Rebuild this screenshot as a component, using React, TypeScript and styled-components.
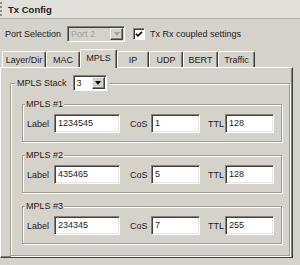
import React from 'react';
import styled, { createGlobalStyle } from 'styled-components';

const FACE = '#d5d2cb';
const SHADOW = '#858279';
const DARK = '#404040';

const GlobalStyle = createGlobalStyle`
  body {
    margin: 0;
    background: ${FACE};
  }
  * {
    box-sizing: border-box;
  }
`;

const Window = styled.div`
  width: 300px;
  height: 265px;
  overflow: hidden;
  background: ${FACE};
  font-family: 'Liberation Sans', Arial, sans-serif;
  font-size: 9px;
  color: #1c1c1c;
  display: flex;
  flex-direction: column;
`;

const TitleBar = styled.div`
  height: 19px;
  flex: 0 0 19px;
  display: flex;
  align-items: center;
  background: #e2e0db;
  border-bottom: 1px solid #b3b0a9;
`;

const Grip = styled.div`
  width: 2px;
  height: 14px;
  border-left: 2px dotted #8f8c86;
`;

const Title = styled.span`
  margin-left: 6px;
  font-weight: bold;
  font-size: 9.5px;
`;

const PortRow = styled.div`
  display: flex;
  align-items: center;
  height: 16px;
  margin-top: 7px;
  padding-left: 5px;
`;

const Text = styled.span<{ $w?: number; $gap?: number }>`
  flex: 0 0 ${p => (p.$w ? `${p.$w}px` : 'auto')};
  margin-left: ${p => p.$gap ?? 0}px;
  white-space: nowrap;
`;

const Combo = styled.div<{ $w: number; $disabled?: boolean; $gap?: number }>`
  width: ${p => p.$w}px;
  height: 16px;
  margin-left: ${p => p.$gap ?? 0}px;
  display: flex;
  padding: 1px;
  background: ${p => (p.$disabled ? FACE : '#fff')};
  border-top: 1px solid ${SHADOW};
  border-left: 1px solid ${SHADOW};
  border-bottom: 1px solid #fff;
  border-right: 1px solid #fff;
  box-shadow: inset 1px 1px 0 ${DARK};
`;

const ComboValue = styled.span<{ $disabled?: boolean }>`
  flex: 1;
  line-height: 12px;
  padding-left: 2px;
  color: ${p => (p.$disabled ? '#a4a19a' : '#1c1c1c')};
`;

const ComboButton = styled.div`
  width: 13px;
  display: flex;
  align-items: center;
  justify-content: center;
  background: ${FACE};
  border: 1px solid;
  border-color: #f4f3ef ${DARK} ${DARK} #f4f3ef;
  box-shadow: inset -1px -1px 0 ${SHADOW};
`;

const Arrow = styled.div<{ $disabled?: boolean }>`
  width: 0;
  height: 0;
  border-left: 3.5px solid transparent;
  border-right: 3.5px solid transparent;
  border-top: 4px solid ${p => (p.$disabled ? '#a4a19a' : '#000')};
`;

const CheckBox = styled.div`
  width: 12px;
  height: 12px;
  margin-left: 8px;
  background: #fff;
  border-top: 1px solid ${SHADOW};
  border-left: 1px solid ${SHADOW};
  border-bottom: 1px solid #fff;
  border-right: 1px solid #fff;
  box-shadow: inset 1px 1px 0 ${DARK};
  display: flex;
  align-items: center;
  justify-content: center;
`;

const TabStrip = styled.div`
  display: flex;
  align-items: flex-end;
  height: 18px;
  margin-top: 7px;
  padding-left: 2px;
`;

const Tab = styled.div<{ $w: number; $active?: boolean }>`
  width: ${p => p.$w}px;
  height: ${p => (p.$active ? 19 : 16)}px;
  margin-bottom: ${p => (p.$active ? -1 : 0)}px;
  position: relative;
  z-index: ${p => (p.$active ? 1 : 0)};
  display: flex;
  align-items: center;
  justify-content: center;
  padding-bottom: ${p => (p.$active ? 2 : 0)}px;
  background: ${FACE};
  border: 1px solid;
  border-bottom: none;
  border-color: #fff ${DARK} transparent #fff;
  border-radius: 2px 2px 0 0;
  box-shadow: inset -1px 0 0 ${SHADOW};
`;

const Panel = styled.div`
  width: 293px;
  padding: 7px 2px 1px 9px;
  border-top: 1px solid #fff;
  border-left: 1px solid #fff;
  border-right: 1px solid ${DARK};
  border-bottom: 1px solid ${DARK};
  box-shadow: inset -1px -1px 0 ${SHADOW};
`;

const Group = styled.fieldset<{ $outer?: boolean }>`
  margin: ${p => (p.$outer ? '0' : '7px 0 0')};
  min-width: 0;
  padding: ${p => (p.$outer ? '0 7px 11px 11px' : '4px 7px 8px 4px')};
  border: 1px solid #a09d96;
  box-shadow: 1px 1px 0 #fff, inset 1px 1px 0 #fff;

  &:first-of-type {
    margin-top: ${p => (p.$outer ? 0 : 7)}px;
  }
`;

const Legend = styled.legend<{ $outer?: boolean }>`
  margin-left: ${p => (p.$outer ? -7 : -2)}px;
  padding: 0 ${p => (p.$outer ? 2 : 1)}px;
  background: ${FACE};
  line-height: 12px;
  display: flex;
  align-items: center;
`;

const FieldRow = styled.div`
  display: flex;
  align-items: center;
  height: 19px;
`;

const Input = styled.input<{ $w: number }>`
  width: ${p => p.$w}px;
  height: 19px;
  margin: 0;
  padding: 0 3px 2px;
  font-family: 'Liberation Sans', Arial, sans-serif;
  font-size: 9px;
  color: #1c1c1c;
  background: #fff;
  outline: none;
  border-top: 1px solid ${SHADOW};
  border-left: 1px solid ${SHADOW};
  border-bottom: 1px solid #fff;
  border-right: 1px solid #fff;
  box-shadow: inset 1px 1px 0 ${DARK}, inset -1px -1px 0 #e6e4de;
`;

const tabs = [
  { name: 'Layer/Dir', w: 44 },
  { name: 'MAC', w: 34 },
  { name: 'MPLS', w: 37 },
  { name: 'IP', w: 32 },
  { name: 'UDP', w: 34 },
  { name: 'BERT', w: 35 },
  { name: 'Traffic', w: 37 },
];

const labels = [
  { label: '1234545', cos: '1', ttl: '128' },
  { label: '435465', cos: '5', ttl: '128' },
  { label: '234345', cos: '7', ttl: '255' },
];

export default function App(): JSX.Element {
  return (
    <Window>
      <GlobalStyle />
      <TitleBar>
        <Grip />
        <Title>Tx Config</Title>
      </TitleBar>

      <PortRow>
        <Text $w={62}>Port Selection</Text>
        <Combo $w={58} $disabled>
          <ComboValue $disabled>Port 2</ComboValue>
          <ComboButton>
            <Arrow $disabled />
          </ComboButton>
        </Combo>
        <CheckBox>
          <svg width="8" height="8" viewBox="0 0 8 8">
            <path d="M1 3.8 L3 5.8 L7 1.8" fill="none" stroke="#000" strokeWidth="1.7" />
          </svg>
        </CheckBox>
        <Text $gap={5}>Tx Rx coupled settings</Text>
      </PortRow>

      <TabStrip>
        {tabs.map(t => (
          <Tab key={t.name} $w={t.w} $active={t.name === 'MPLS'}>
            {t.name}
          </Tab>
        ))}
      </TabStrip>

      <Panel>
        <Group $outer>
          <Legend $outer>
            <Text>MPLS Stack</Text>
            <Combo $w={34} $gap={6}>
              <ComboValue>3</ComboValue>
              <ComboButton>
                <Arrow />
              </ComboButton>
            </Combo>
          </Legend>

          {labels.map((row, i) => (
            <Group key={i}>
              <Legend>MPLS #{i + 1}</Legend>
              <FieldRow>
                <Text $w={27}>Label</Text>
                <Input $w={66} defaultValue={row.label} readOnly />
                <Text $w={21} $gap={10}>CoS</Text>
                <Input $w={49} defaultValue={row.cos} readOnly />
                <Text $w={17} $gap={8}>TTL</Text>
                <Input $w={49} defaultValue={row.ttl} readOnly />
              </FieldRow>
            </Group>
          ))}
        </Group>
      </Panel>
    </Window>
  );
}
